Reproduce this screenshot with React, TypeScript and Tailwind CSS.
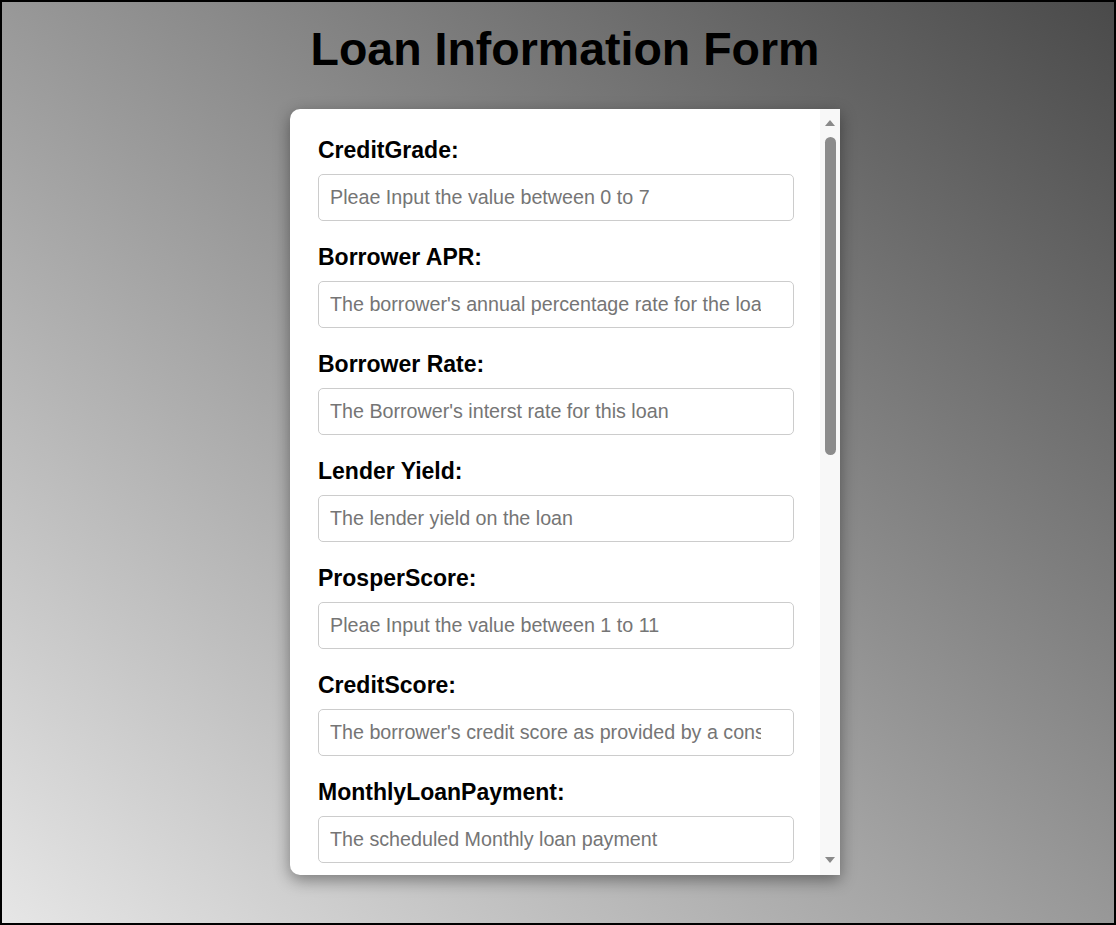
import React from "react";

const fields = [
  { label: "CreditGrade:", ph: "Pleae Input the value between 0 to 7" },
  { label: "Borrower APR:", ph: "The borrower's annual percentage rate for the loan" },
  { label: "Borrower Rate:", ph: "The Borrower's interst rate for this loan" },
  { label: "Lender Yield:", ph: "The lender yield on the loan" },
  { label: "ProsperScore:", ph: "Pleae Input the value between 1 to 11" },
  { label: "CreditScore:", ph: "The borrower's credit score as provided by a consumer credit rating agency" },
  { label: "MonthlyLoanPayment:", ph: "The scheduled Monthly loan payment" },
];

export default function App() {
  return (
    <div className="h-[925px] w-full overflow-hidden border-2 border-black bg-linear-to-tr/srgb from-[#e6e6e6] to-[#4a4a4a] font-['Liberation_Sans',Arial,sans-serif] text-black">
      <div className="flex flex-col items-center pl-[14px]">
        <h1 className="mt-[21px] mb-[33px] text-[46.5px] font-bold leading-[53px]">Loan Information Form</h1>
        <div className="flex h-[766px] w-[550px] rounded-l-[10px] bg-white shadow-[0_5px_16px_rgba(0,0,0,0.4)]">
          <form className="flex-1 overflow-hidden pt-[28px] pl-[28px] pr-[26px]">
            {fields.map((f) => (
              <div key={f.label} className="mb-[23px]">
                <label className="mb-[11px] block text-[23px] font-bold leading-[26px]">{f.label}</label>
                <input
                  type="text"
                  placeholder={f.ph}
                  className="block h-[47px] w-full rounded-[5px] border border-[#cccccc] bg-white pl-[11px] pr-[32px] text-[19.7px] outline-none placeholder:text-[#757575]"
                />
              </div>
            ))}
          </form>
          <div className="flex w-[20px] flex-col items-center bg-[#f8f8f8]">
            <svg width="10" height="6" viewBox="0 0 10 6" className="mt-[11px]">
              <path d="M5 0 L10 6 L0 6 Z" fill="#8a8a8a" />
            </svg>
            <div className="mt-[11px] ml-[1px] h-[318px] w-[11px] rounded-full bg-[#8c8c8c]" />
            <div className="flex-1" />
            <svg width="10" height="6" viewBox="0 0 10 6" className="mb-[12px]">
              <path d="M0 0 L10 0 L5 6 Z" fill="#8a8a8a" />
            </svg>
          </div>
        </div>
      </div>
    </div>
  );
}
